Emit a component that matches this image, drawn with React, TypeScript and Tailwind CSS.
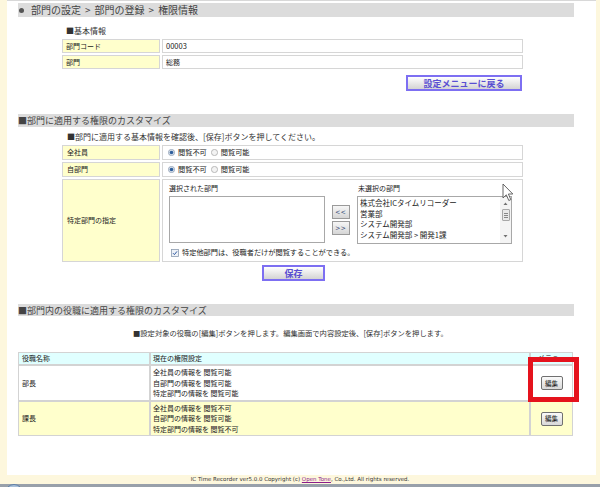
import React from "react";

function Radio({ checked }: { checked: boolean }) {
  return (
    <svg width="7" height="7" viewBox="0 0 7 7" className="shrink-0">
      {checked ? (
        <>
          <circle cx="3.5" cy="3.5" r="3.1" fill="#dfe6ee" stroke="#8294aa" strokeWidth="0.7" />
          <circle cx="3.5" cy="3.5" r="1.8" fill="#2f5f9c" />
        </>
      ) : (
        <circle cx="3.5" cy="3.5" r="3.1" fill="#f3f3f3" stroke="#a0a0a0" strokeWidth="0.7" />
      )}
    </svg>
  );
}

function RadioRow() {
  return (
    <div className="flex items-center pl-[5px] text-[7.2px] leading-none text-[#222]">
      <Radio checked />
      <span className="ml-[3px]">閲覧不可</span>
      <span className="ml-[4px]">
        <Radio checked={false} />
      </span>
      <span className="ml-[3px]">閲覧可能</span>
    </div>
  );
}

function SectionHeader({ children, className }: { children: React.ReactNode; className: string }) {
  return (
    <div className={"bg-[#dcdcdc] flex items-center text-[9px] leading-none text-[#444] " + className}>
      {children}
    </div>
  );
}

function EditButton() {
  return (
    <div className="w-[22px] h-[14px] rounded-[2px] border border-[#707070] bg-linear-to-b from-[#fafafa] to-[#d9d9d9] flex items-center justify-center text-[6.5px] leading-none text-[#111]">
      編集
    </div>
  );
}

function PermRow({ name, values, bg, h }: { name: string; values: string[]; bg: string; h: string }) {
  return (
    <div className={"grid grid-cols-[132px_380px_43px] " + bg + " " + h}>
      <div className="border border-[#d3d3d3] flex items-center pl-[3px]">{name}</div>
      <div className="border border-[#d3d3d3] flex flex-col justify-center pl-[2px] leading-[10.5px]">
        <div>全社員の情報を {values[0]}</div>
        <div>自部門の情報を {values[1]}</div>
        <div>特定部門の情報を {values[2]}</div>
      </div>
      <div className="border border-[#d3d3d3] flex items-center justify-center">
        <EditButton />
      </div>
    </div>
  );
}

export default function App() {
  return (
    <div className="relative w-[600px] h-[487px] overflow-hidden bg-[#fdf7dd] font-['Noto_Sans_CJK_JP',sans-serif] text-[#222]">
      <div className="ml-[7px] mr-[4px] h-[475px] bg-white border-t border-[#d8d8d8] pl-[11px] pr-[22px] flex flex-col">
        {/* Title */}
        <div className="mt-[2px] h-[14px] bg-[#dcdcdc] flex items-center text-[10px] leading-none text-[#444]">
          <span className="inline-block w-[5px] h-[5px] rounded-full bg-[#555] ml-[1px] mr-[7px]" />
          <span>部門の設定</span>
          <span className="mx-[4px]">&gt;</span>
          <span>部門の登録</span>
          <span className="mx-[4px]">&gt;</span>
          <span>権限情報</span>
        </div>

        <div className="mt-[9px] ml-[48px] text-[8px] leading-[10px] text-[#333]">■基本情報</div>

        <div className="mt-[3px] ml-[44px] w-[461px] grid grid-cols-[98px_361px] gap-[2px] text-[7px] leading-none">
          <div className="h-[14px] bg-[#ffffcc] border border-[#d6d6d6] pl-[3px] flex items-center">部門コード</div>
          <div className="h-[14px] bg-white border border-[#d6d6d6] pl-[3px] flex items-center text-[7.5px]">00003</div>
          <div className="h-[14px] bg-[#ffffcc] border border-[#d6d6d6] pl-[3px] flex items-center">部門</div>
          <div className="h-[14px] bg-white border border-[#d6d6d6] pl-[3px] flex items-center">総務</div>
        </div>

        <div className="mt-[6px] self-end mr-[52px] w-[116px] h-[16px] border-2 border-[#7d6ff2] bg-linear-to-b from-white to-[#d4d4d4] flex items-center justify-center text-[9px] leading-none font-bold text-[#5a4fd2]">
          設定メニューに戻る
        </div>

        <SectionHeader className="mt-[23px] h-[13px]">■部門に適用する権限のカスタマイズ</SectionHeader>

        <div className="mt-[5px] ml-[49px] text-[8px] leading-[10px] text-[#333] whitespace-nowrap">
          ■部門に適用する基本情報を確認後、[保存]ボタンを押してください。
        </div>

        <div className="mt-[3px] ml-[44px] w-[461px] grid grid-cols-[98px_361px] gap-[2px] text-[7px] leading-none">
          <div className="h-[15px] bg-[#ffffcc] border border-[#d6d6d6] pl-[4px] flex items-center">全社員</div>
          <div className="h-[15px] bg-white border border-[#d6d6d6] flex items-center">
            <RadioRow />
          </div>
          <div className="h-[15px] bg-[#ffffcc] border border-[#d6d6d6] pl-[4px] flex items-center">自部門</div>
          <div className="h-[15px] bg-white border border-[#d6d6d6] flex items-center">
            <RadioRow />
          </div>
          <div className="h-[83px] bg-[#ffffcc] border border-[#d6d6d6] pl-[4px] flex items-center">特定部門の指定</div>
          <div className="h-[83px] bg-white border border-[#d6d6d6] pl-[6px] pt-[3px] flex flex-col">
            <div className="flex items-start">
              <div className="w-[156px] flex flex-col">
                <div className="h-[10px] leading-[10px] text-[7px]">選択された部門</div>
                <div className="mt-[3px] h-[47px] border border-[#a8a8a8] bg-white" />
              </div>
              <div className="ml-[7px] mt-[22px] flex flex-col gap-[2px]">
                <div className="w-[18px] h-[14px] border border-[#9a9a9a] bg-linear-to-b from-[#f6f6f6] to-[#d6d6d6] flex items-center justify-center text-[8px] leading-none text-[#2c3e70] tracking-[1px]">
                  &lt;&lt;
                </div>
                <div className="w-[18px] h-[14px] border border-[#9a9a9a] bg-linear-to-b from-[#f6f6f6] to-[#d6d6d6] flex items-center justify-center text-[8px] leading-none text-[#2c3e70] tracking-[1px]">
                  &gt;&gt;
                </div>
              </div>
              <div className="ml-[7px] w-[155px] flex flex-col">
                <div className="h-[10px] leading-[10px] text-[7px] pl-[1px]">未選択の部門</div>
                <div className="mt-[3px] h-[48px] border border-[#a8a8a8] bg-white flex overflow-hidden">
                  <div className="flex-1 pl-[2px] pt-[1px] text-[7.5px] leading-[10.5px] whitespace-nowrap text-[#222]">
                    <div>株式会社ICタイムリコーダー</div>
                    <div>営業部</div>
                    <div>システム開発部</div>
                    <div>システム開発部 &gt; 開発1課</div>
                  </div>
                  <div className="w-[11px] h-full bg-[#f4f4f4] flex flex-col items-center">
                    <svg width="7" height="9" viewBox="0 0 7 9" className="mt-[2px]">
                      <path d="M1.5 6 L3.5 3.5 L5.5 6 Z" fill="#707070" />
                    </svg>
                    <div className="mt-[1px] w-[8px] h-[12px] border border-[#a8a8a8] rounded-[1px] bg-[#eaeaea] flex flex-col items-center justify-center gap-[1px]">
                      <div className="w-[4px] h-[1px] bg-[#888]" />
                      <div className="w-[4px] h-[1px] bg-[#888]" />
                      <div className="w-[4px] h-[1px] bg-[#888]" />
                    </div>
                    <div className="flex-1" />
                    <svg width="7" height="9" viewBox="0 0 7 9" className="mb-[2px]">
                      <path d="M1.5 3 L3.5 5.5 L5.5 3 Z" fill="#707070" />
                    </svg>
                  </div>
                </div>
              </div>
            </div>
            <div className="mt-[5px] ml-[2px] flex items-center gap-[3px] text-[7.2px] leading-none">
              <svg width="8" height="8" viewBox="0 0 8 8" className="shrink-0">
                <rect x="0.5" y="0.5" width="7" height="7" fill="#eef2f8" stroke="#8c9cb0" strokeWidth="0.8" />
                <path d="M2 4.2 L3.4 5.6 L6 2.4" fill="none" stroke="#2b56a0" strokeWidth="1" />
              </svg>
              <span>特定他部門は、役職者だけが閲覧することができる。</span>
            </div>
          </div>
        </div>

        <div className="mt-[3px] ml-[244px] w-[63px] h-[16px] border-2 border-[#7d6ff2] bg-linear-to-b from-white to-[#d4d4d4] flex items-center justify-center text-[9px] leading-none font-bold text-[#5a4fd2]">
          保存
        </div>

        <SectionHeader className="mt-[23px] h-[12px]">■部門内の役職に適用する権限のカスタマイズ</SectionHeader>

        <div className="mt-[12px] ml-[115px] text-[7.3px] leading-[10px] text-[#333] whitespace-nowrap">
          ■設定対象の役職の[編集]ボタンを押します。編集画面で内容設定後、[保存]ボタンを押します。
        </div>

        <div className="mt-[14px] w-[555px] flex flex-col text-[7px] leading-none text-[#222]">
          <div className="grid grid-cols-[132px_380px_43px] h-[13px] bg-[#e0ffff]">
            <div className="border border-[#d3d3d3] flex items-center pl-[3px]">役職名称</div>
            <div className="border border-[#d3d3d3] flex items-center pl-[2px]">現在の権限設定</div>
            <div className="border border-[#d3d3d3] flex items-start pl-[7px] pt-[1px]">メニュー</div>
          </div>
          <PermRow name="部長" values={["閲覧可能", "閲覧可能", "閲覧可能"]} bg="bg-white" h="h-[36px]" />
          <PermRow name="課長" values={["閲覧不可", "閲覧可能", "閲覧不可"]} bg="bg-[#ffffcc]" h="h-[35px]" />
        </div>
      </div>

      <div className="h-[9px] flex items-center justify-center font-['DejaVu_Sans',sans-serif] text-[5.5px] leading-none text-[#333] whitespace-nowrap">
        <span>IC Time Recorder ver5.0.0 Copyright (c)&nbsp;</span>
        <span className="text-[#8a1c8a] underline">Open Tone</span>
        <span>, Co.,Ltd. All rights reserved.</span>
      </div>
      <div className="h-[3px] bg-[#98a0aa]" />

      {/* Windows orb peek */}
      <div className="absolute left-[5px] top-[484px] w-[18px] h-[18px] rounded-full border border-[#5d7fa8] bg-[#a9bfd8]" />

      {/* Highlight box */}
      <div className="absolute left-[528px] top-[357px] w-[51px] h-[45px] border-[5px] border-[#e5131d]" />

      {/* Mouse cursor */}
      <svg className="absolute left-[502px] top-[183px]" width="12" height="19" viewBox="0 0 12 19">
        <path d="M1 1 L1 15 L4.3 11.8 L6.8 17.5 L8.8 16.6 L6.4 11 L10.8 11 Z" fill="white" stroke="#555" strokeWidth="0.9" strokeLinejoin="round" />
      </svg>
    </div>
  );
}
